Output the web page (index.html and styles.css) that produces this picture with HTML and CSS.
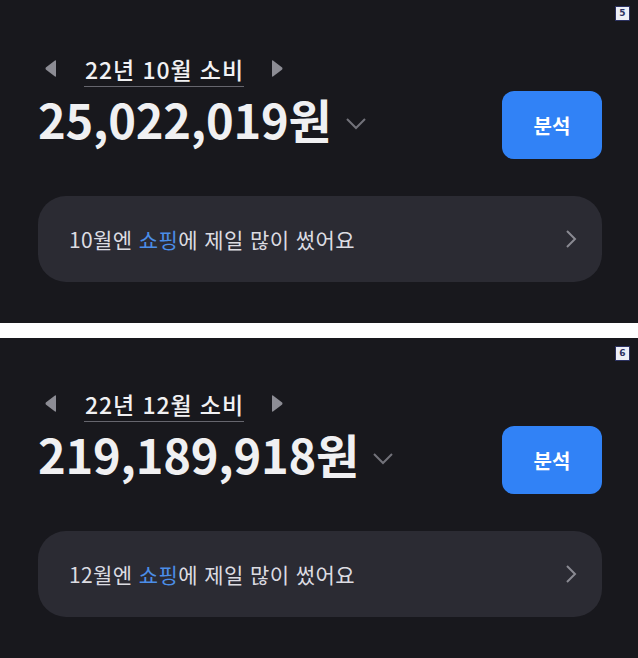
FILE: index.html
```html
<!DOCTYPE html>
<html lang="ko">

<head>
    <meta charset="UTF-8">
    <meta name="viewport" content="width=device-width, initial-scale=1.0">
    <title>소비</title>
    <link rel="stylesheet" href="styles.css">
</head>

<body>
    <section class="panel first">
        <span class="badge">5</span>
        <div class="month-nav">
            <svg class="arrow" width="13" height="19" viewBox="0 0 13 19"><path d="M11 1.5 L1.8 8.6 Q1.2 9.5 1.8 10.4 L11 17.5 Q12 18 12 17 L12 2 Q12 1 11 1.5 Z" fill="#8c8c94"/></svg>
            <span class="month-title">22년 10월 소비</span>
            <svg class="arrow" width="13" height="19" viewBox="0 0 13 19"><path d="M2 1.5 L11.2 8.6 Q11.8 9.5 11.2 10.4 L2 17.5 Q1 18 1 17 L1 2 Q1 1 2 1.5 Z" fill="#8c8c94"/></svg>
        </div>
        <div class="amount-row">
            <span class="amount">25,022,019원</span>
            <svg class="caret" width="22" height="14" viewBox="0 0 22 14"><path d="M2 2 L11 11 L20 2" fill="none" stroke="#72727a" stroke-width="2"/></svg>
            <button class="btn">분석</button>
        </div>
        <a class="summary" href="#">
            <span>10월엔 <em>쇼핑</em>에 제일 많이 썼어요</span>
            <svg width="12" height="20" viewBox="0 0 12 20"><path d="M2 2 L10 10 L2 18" fill="none" stroke="#8a8a92" stroke-width="2"/></svg>
        </a>
    </section>

    <section class="panel second">
        <span class="badge">6</span>
        <div class="month-nav">
            <svg class="arrow" width="13" height="19" viewBox="0 0 13 19"><path d="M11 1.5 L1.8 8.6 Q1.2 9.5 1.8 10.4 L11 17.5 Q12 18 12 17 L12 2 Q12 1 11 1.5 Z" fill="#8c8c94"/></svg>
            <span class="month-title">22년 12월 소비</span>
            <svg class="arrow" width="13" height="19" viewBox="0 0 13 19"><path d="M2 1.5 L11.2 8.6 Q11.8 9.5 11.2 10.4 L2 17.5 Q1 18 1 17 L1 2 Q1 1 2 1.5 Z" fill="#8c8c94"/></svg>
        </div>
        <div class="amount-row">
            <span class="amount">219,189,918원</span>
            <svg class="caret" width="22" height="14" viewBox="0 0 22 14"><path d="M2 2 L11 11 L20 2" fill="none" stroke="#72727a" stroke-width="2"/></svg>
            <button class="btn">분석</button>
        </div>
        <a class="summary" href="#">
            <span>12월엔 <em>쇼핑</em>에 제일 많이 썼어요</span>
            <svg width="12" height="20" viewBox="0 0 12 20"><path d="M2 2 L10 10 L2 18" fill="none" stroke="#8a8a92" stroke-width="2"/></svg>
        </a>
    </section>
</body>

</html>
```

FILE: styles.css
```css
* {
    margin: 0;
    padding: 0;
    box-sizing: border-box;
}

body {
    font-family: 'Noto Sans CJK KR', 'Noto Sans', sans-serif;
    background-color: #fff;
    display: flex;
    flex-direction: column;
    gap: 15px;
}

.panel {
    position: relative;
    background-color: #18181d;
    padding: 0 36px 0 38px;
    display: flex;
    flex-direction: column;
}

.first {
    height: 323px;
    padding-top: 56px;
}

.second {
    height: 320px;
    padding-top: 53px;
}

.badge {
    position: absolute;
    top: 6px;
    right: 8px;
    width: 15px;
    height: 15px;
    border: 1px solid #2b3160;
    background-color: #eceef6;
    color: #2b3160;
    font-family: 'DejaVu Sans', sans-serif;
    font-size: 9px;
    font-weight: 700;
    line-height: 13px;
    text-align: center;
}

.second .badge {
    top: 8px;
}

.month-nav {
    display: flex;
    align-items: center;
    margin-left: 6px;
    gap: 27px;
}

.arrow {
    margin-top: -6px;
}

.month-title {
    color: #f1f1f3;
    font-size: 23px;
    font-weight: 500;
    line-height: 27px;
    letter-spacing: 0.9px;
    padding: 0 0 3px 1px;
    border-bottom: 1.5px solid #66666e;
}

.amount-row {
    display: flex;
    align-items: flex-start;
    margin-top: 4px;
}

.amount {
    color: #f0f0f2;
    font-size: 47px;
    font-weight: 700;
    line-height: 56px;
    letter-spacing: -0.2px;
}

.caret {
    margin: 26px 0 0 13px;
}

.btn {
    margin-left: auto;
    width: 100px;
    height: 68px;
    border: none;
    border-radius: 12px;
    background-color: #3182f6;
    color: #fff;
    font-family: inherit;
    font-size: 20px;
    font-weight: 600;
    cursor: pointer;
}

.summary {
    margin-top: 37px;
    height: 86px;
    border-radius: 28px;
    background-color: #2b2b33;
    padding: 0 25px 0 31px;
    display: flex;
    align-items: center;
    justify-content: space-between;
    text-decoration: none;
    color: #dcdce2;
    font-size: 21px;
    letter-spacing: 0.4px;
}

.summary em {
    font-style: normal;
    color: #4b8ee8;
}
```
